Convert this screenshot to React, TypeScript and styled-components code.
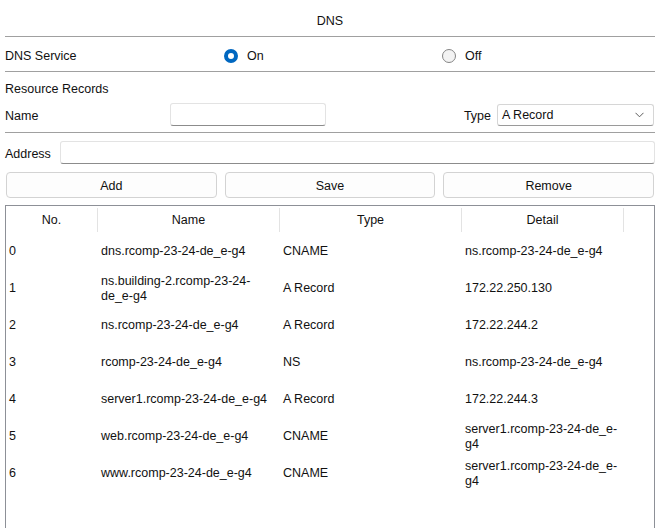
import React from "react";
import styled, { createGlobalStyle } from "styled-components";

const Global = createGlobalStyle`
  html, body { margin: 0; padding: 0; background: #ffffff; }
  body {
    font-family: "Liberation Sans", Arial, sans-serif;
    font-size: 12.5px;
    color: #111111;
    overflow: hidden;
  }
  * { box-sizing: border-box; }
`;

const Page = styled.div`
  height: 528px;
  padding: 0 6px 0 5px;
  display: flex;
  flex-direction: column;
`;

const Title = styled.div`
  height: 37px;
  padding-top: 6px;
  display: flex;
  align-items: center;
  justify-content: center;
  border-bottom: 1px solid #a0a0a0;
`;

const ServiceRow = styled.div`
  height: 35px;
  padding-top: 4px;
  display: grid;
  grid-template-columns: 219px 218px 1fr;
  align-items: center;
  border-bottom: 1px solid #a0a0a0;
`;

const RadioLabel = styled.label`
  display: flex;
  align-items: center;
  gap: 9px;
`;

const RadioDot = styled.span<{ $checked?: boolean }>`
  width: 14px;
  height: 14px;
  margin-top: -1px;
  border-radius: 50%;
  display: inline-block;
  flex: none;
  background: ${(p) => (p.$checked ? "#ffffff" : "#f3f3f3")};
  border: ${(p) => (p.$checked ? "4px solid #0067c0" : "1px solid #858585")};
`;

const Section = styled.div`
  border-bottom: 1px solid #a0a0a0;
`;

const SectionHeading = styled.div`
  height: 25px;
  padding-top: 9px;
  line-height: 16px;
`;

const NameRow = styled.div`
  height: 35px;
  display: flex;
  align-items: center;
`;

const FieldLabel = styled.span<{ $w?: number }>`
  width: ${(p) => (p.$w ? `${p.$w}px` : "auto")};
  padding-top: 2px;
  flex: none;
`;

const TextBox = styled.div<{ $w?: number }>`
  height: 23px;
  width: ${(p) => (p.$w ? `${p.$w}px` : "auto")};
  flex: ${(p) => (p.$w ? "none" : "1")};
  background: #ffffff;
  border: 1px solid #e3e3e3;
  border-bottom: 1px solid #8c8c8c;
  border-radius: 3px;
`;

const TypeGroup = styled.div`
  margin-left: auto;
  display: flex;
  align-items: center;
  gap: 6px;
`;

const Select = styled.div`
  width: 157px;
  height: 22px;
  margin-right: 1px;
  padding: 1px 9px 0 4px;
  display: flex;
  align-items: center;
  justify-content: space-between;
  background: #ffffff;
  border: 1px solid #d6d6d6;
  border-bottom: 1px solid #9a9a9a;
  border-radius: 3px;
`;

const AddressRow = styled.div`
  padding-top: 8px;
  display: flex;
  align-items: center;
`;

const ButtonBar = styled.div`
  margin-top: 8px;
  padding: 0 1px;
  display: grid;
  grid-template-columns: repeat(3, 1fr);
  gap: 8px;
`;

const Button = styled.button`
  height: 26px;
  font: inherit;
  color: #111111;
  background: #fdfdfd;
  border: 1px solid #d3d3d3;
  border-radius: 4px;
  padding: 2px 0 0;
`;

const Table = styled.div`
  margin-top: 7px;
  flex: 1;
  border: 1px solid #8d9097;
  border-bottom: none;
`;

const cols = "92px 182px 182px 162px 1fr";

const HeaderRow = styled.div`
  height: 27px;
  padding: 2px 0 1px;
  display: grid;
  grid-template-columns: ${cols};
`;

const HeaderCell = styled.div`
  display: flex;
  align-items: center;
  justify-content: center;
  border-right: 1px solid #e3e3e3;
`;

const BodyRow = styled.div`
  height: 37px;
  display: grid;
  grid-template-columns: ${cols};
  align-items: center;
`;

const Cell = styled.div`
  padding: 0 3px;
  line-height: 15px;
`;

const records = [
  ["0", "dns.rcomp-23-24-de_e-g4", "CNAME", "ns.rcomp-23-24-de_e-g4"],
  ["1", "ns.building-2.rcomp-23-24-de_e-g4", "A Record", "172.22.250.130"],
  ["2", "ns.rcomp-23-24-de_e-g4", "A Record", "172.22.244.2"],
  ["3", "rcomp-23-24-de_e-g4", "NS", "ns.rcomp-23-24-de_e-g4"],
  ["4", "server1.rcomp-23-24-de_e-g4", "A Record", "172.22.244.3"],
  ["5", "web.rcomp-23-24-de_e-g4", "CNAME", "server1.rcomp-23-24-de_e-g4"],
  ["6", "www.rcomp-23-24-de_e-g4", "CNAME", "server1.rcomp-23-24-de_e-g4"],
];

const Chevron = () => (
  <svg width="9" height="6" viewBox="0 0 9 6" aria-hidden>
    <path d="M0.5 0.8 L4.5 4.8 L8.5 0.8" fill="none" stroke="#5c5c5c" strokeWidth="1" />
  </svg>
);

export default function App() {
  return (
    <>
      <Global />
      <Page>
        <Title>DNS</Title>
        <ServiceRow>
          <span>DNS Service</span>
          <RadioLabel>
            <RadioDot $checked />
            On
          </RadioLabel>
          <RadioLabel>
            <RadioDot />
            Off
          </RadioLabel>
        </ServiceRow>
        <Section>
          <SectionHeading>Resource Records</SectionHeading>
          <NameRow>
            <FieldLabel $w={165}>Name</FieldLabel>
            <TextBox $w={156} />
            <TypeGroup>
              <FieldLabel>Type</FieldLabel>
              <Select>
                <span>A Record</span>
                <Chevron />
              </Select>
            </TypeGroup>
          </NameRow>
        </Section>
        <AddressRow>
          <FieldLabel $w={55}>Address</FieldLabel>
          <TextBox />
        </AddressRow>
        <ButtonBar>
          <Button>Add</Button>
          <Button>Save</Button>
          <Button>Remove</Button>
        </ButtonBar>
        <Table>
          <HeaderRow>
            <HeaderCell>No.</HeaderCell>
            <HeaderCell>Name</HeaderCell>
            <HeaderCell>Type</HeaderCell>
            <HeaderCell>Detail</HeaderCell>
            <div />
          </HeaderRow>
          {records.map((r) => (
            <BodyRow key={r[0]}>
              <Cell>{r[0]}</Cell>
              <Cell>{r[1]}</Cell>
              <Cell>{r[2]}</Cell>
              <Cell>{r[3]}</Cell>
              <div />
            </BodyRow>
          ))}
        </Table>
      </Page>
    </>
  );
}
